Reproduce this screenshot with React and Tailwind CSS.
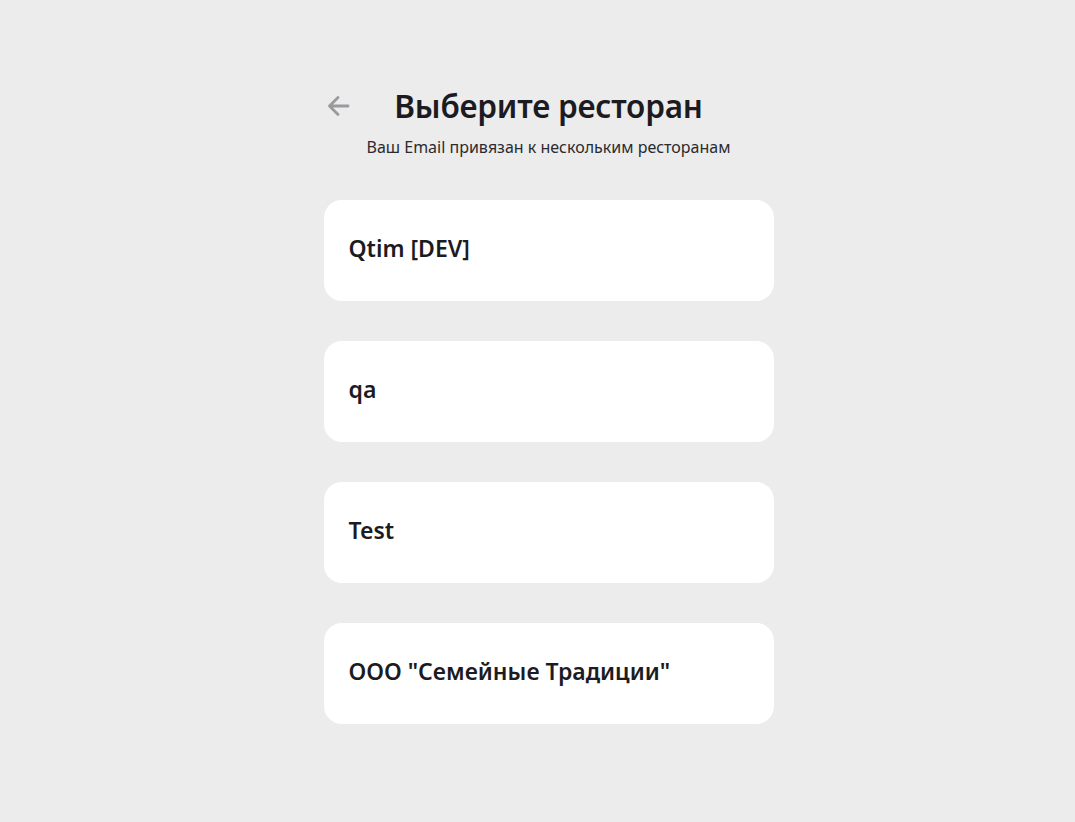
const restaurants = ["Qtim [DEV]", "qa", "Test", 'ООО "Семейные Традиции"'];

function BackArrow() {
  return (
    <svg width="23" height="22" viewBox="0 0 23 22" fill="none">
      <path
        d="M11 2.5L2.5 11L11 19.5M2.5 11H21"
        stroke="currentColor"
        strokeWidth="2.8"
        strokeLinecap="round"
        strokeLinejoin="round"
      />
    </svg>
  );
}

function App() {
  return (
    <div
      className="min-h-[822px] bg-[#ececec] pt-[84px] pl-[22px] flex justify-center"
      style={{ fontFamily: '"Noto Sans", "Open Sans", sans-serif' }}
    >
      <div className="w-[450px]">
        <div className="flex items-center justify-between">
          <button className="w-[34px] h-[30px] flex items-center justify-start pl-[3px] text-[#9a9a9e]">
            <BackArrow />
          </button>
          <h1 className="text-[31.5px] leading-[44px] font-semibold text-[#1c1b22] tracking-[-0.2px]">
            Выберите ресторан
          </h1>
          <div className="w-[34px]" />
        </div>
        <p className="mt-[7px] text-center text-[16px] leading-[24px] text-[#2a2a30]">
          Ваш Email привязан к нескольким ресторанам
        </p>

        <div className="mt-[41px] flex flex-col gap-[40px]">
          {restaurants.map((name) => (
            <button
              key={name}
              className="h-[101px] w-full bg-white rounded-[18px] px-[25px] pb-[4px] flex items-center text-left"
            >
              <span className="text-[23px] font-semibold text-[#1c1b22]">{name}</span>
            </button>
          ))}
        </div>
      </div>
    </div>
  );
}

export default App;
